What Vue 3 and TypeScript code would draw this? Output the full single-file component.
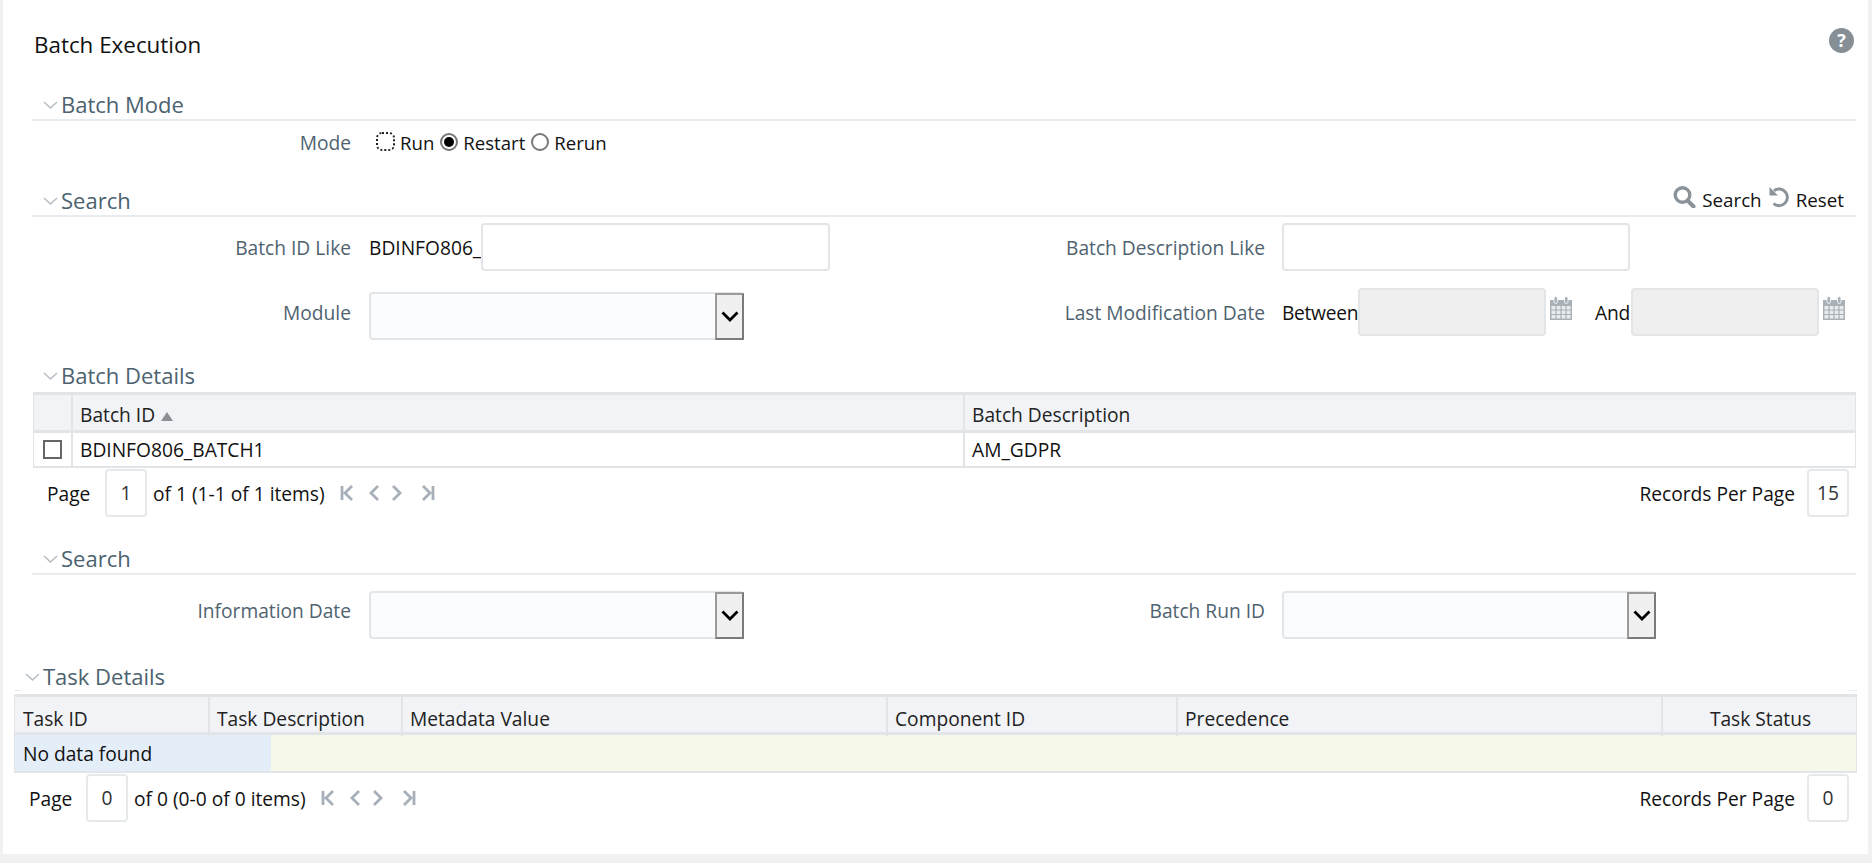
<script setup lang="ts">
const taskCols = ['Task ID', 'Task Description', 'Metadata Value', 'Component ID', 'Precedence', 'Task Status']
</script>

<template>
  <div class="page">
    <main class="panel">
      <header class="title-row">
        <h1 class="title">Batch Execution</h1>
        <svg class="help" viewBox="0 0 25 25" width="25" height="25">
          <circle cx="12.5" cy="12.5" r="12.5" fill="#868e96" />
          <text x="12.5" y="19" text-anchor="middle" class="help-q">?</text>
        </svg>
      </header>

      <section class="sec">
        <div class="head lined">
          <svg class="chev" viewBox="0 0 15 8" width="15" height="8"><path d="M1 1l6.500 6L14 1" /></svg>
          <span>Batch Mode</span>
        </div>
        <div class="mode-row">
          <span class="label">Mode</span>
          <span class="radio-focus"></span><span class="opt first">Run</span>
          <span class="radio on"><i></i></span><span class="opt">Restart</span>
          <span class="radio"></span><span class="opt">Rerun</span>
        </div>
      </section>

      <section class="sec">
        <div class="head lined">
          <svg class="chev" viewBox="0 0 15 8" width="15" height="8"><path d="M1 1l6.500 6L14 1" /></svg>
          <span>Search</span>
          <div class="actions">
            <svg class="act-ico" viewBox="0 0 23 22" width="23" height="22">
              <circle cx="9.500" cy="9" r="7.300" fill="none" stroke="#8b939a" stroke-width="3.400" />
              <path d="M14.500 14.500l6 6" stroke="#8b939a" stroke-width="4" stroke-linecap="round" />
            </svg>
            <span class="act-text s">Search</span>
            <svg class="act-ico" viewBox="0 0 22 22" width="22" height="22">
              <path d="M6 4.800A8.300 8.300 0 1 1 5.500 17.500" fill="none" stroke="#8b939a" stroke-width="3" />
              <path d="M1.500 1v8.500H10z" fill="#8b939a" />
            </svg>
            <span class="act-text">Reset</span>
          </div>
        </div>
        <div class="form-row first-form">
          <div class="field">
            <span class="label">Batch ID Like</span>
            <span class="prefix">BDINFO806_</span>
            <span class="input batch-input"></span>
          </div>
          <div class="field">
            <span class="label wide">Batch Description Like</span>
            <span class="input desc-input"></span>
          </div>
        </div>
        <div class="form-row second-form">
          <div class="field">
            <span class="label lower">Module</span>
            <span class="select low">
              <span class="arrow"><svg viewBox="0 0 18 11" width="18" height="11"><path d="M1.500 1.500L9 9l7.500-7.500" /></svg></span>
            </span>
          </div>
          <div class="field">
            <span class="label wide lower">Last Modification Date</span>
            <span class="plain lower between">Between</span>
            <span class="input date"></span>
            <svg class="cal" viewBox="0 0 22 24" width="22" height="24">
              <path d="M0 4h22v20H0z" fill="#a9b0b6" />
              <path d="M1.500 10h19v12.500h-19z" fill="#e9ecee" />
              <path d="M6 10v13M11 10v13M16 10v13M1 14h20M1 18.500h20" stroke="#a9b0b6" stroke-width="1.200" />
              <rect x="4" y="0.500" width="3.500" height="7" rx="1.700" fill="#a9b0b6" stroke="#fff" stroke-width="0.800" />
              <rect x="14.500" y="0.500" width="3.500" height="7" rx="1.700" fill="#a9b0b6" stroke="#fff" stroke-width="0.800" />
            </svg>
            <span class="plain lower and">And</span>
            <span class="input date"></span>
            <svg class="cal" viewBox="0 0 22 24" width="22" height="24">
              <path d="M0 4h22v20H0z" fill="#a9b0b6" />
              <path d="M1.500 10h19v12.500h-19z" fill="#e9ecee" />
              <path d="M6 10v13M11 10v13M16 10v13M1 14h20M1 18.500h20" stroke="#a9b0b6" stroke-width="1.200" />
              <rect x="4" y="0.500" width="3.500" height="7" rx="1.700" fill="#a9b0b6" stroke="#fff" stroke-width="0.800" />
              <rect x="14.500" y="0.500" width="3.500" height="7" rx="1.700" fill="#a9b0b6" stroke="#fff" stroke-width="0.800" />
            </svg>
          </div>
        </div>
      </section>

      <section class="sec details">
        <div class="head details-head">
          <svg class="chev" viewBox="0 0 15 8" width="15" height="8"><path d="M1 1l6.500 6L14 1" /></svg>
          <span>Batch Details</span>
        </div>
        <div class="table batch-table">
          <div class="grid batch-grid thead">
            <div class="cell"></div>
            <div class="cell">Batch ID <svg class="sort" viewBox="0 0 12 9" width="12" height="9"><path d="M6 0l6 9H0z" /></svg></div>
            <div class="cell">Batch Description</div>
          </div>
          <div class="grid batch-grid tbody">
            <div class="cell check-cell"><span class="check"></span></div>
            <div class="cell">BDINFO806_BATCH1</div>
            <div class="cell">AM_GDPR</div>
          </div>
        </div>
        <div class="pager batch-pager">
          <span class="pg-label">Page</span>
          <span class="pg-box">1</span>
          <span class="pg-of">of 1 (1-1 of 1 items)</span>
          <span class="pg-icons">
            <svg viewBox="0 0 14 16" width="14" height="16"><path d="M2 1v14M12 1L5 8l7 7" /></svg>
            <svg class="prev" viewBox="0 0 12 16" width="12" height="16"><path d="M10 1L3 8l7 7" /></svg>
            <svg class="next" viewBox="0 0 12 16" width="12" height="16"><path d="M2 1l7 7-7 7" /></svg>
            <svg class="last" viewBox="0 0 14 16" width="14" height="16"><path d="M12 1v14M2 1l7 7-7 7" /></svg>
          </span>
          <span class="pg-right">Records Per Page</span>
          <span class="pg-box rec">15</span>
        </div>
      </section>

      <section class="sec">
        <div class="head lined">
          <svg class="chev" viewBox="0 0 15 8" width="15" height="8"><path d="M1 1l6.500 6L14 1" /></svg>
          <span>Search</span>
        </div>
        <div class="form-row third-form">
          <div class="field">
            <span class="label up">Information Date</span>
            <span class="select">
              <span class="arrow"><svg viewBox="0 0 18 11" width="18" height="11"><path d="M1.500 1.500L9 9l7.500-7.500" /></svg></span>
            </span>
          </div>
          <div class="field">
            <span class="label wide up">Batch Run ID</span>
            <span class="select run">
              <span class="arrow"><svg viewBox="0 0 18 11" width="18" height="11"><path d="M1.500 1.500L9 9l7.500-7.500" /></svg></span>
            </span>
          </div>
        </div>
      </section>

      <section class="task">
        <div class="head task-head">
          <svg class="chev" viewBox="0 0 15 8" width="15" height="8"><path d="M1 1l6.500 6L14 1" /></svg>
          <span>Task Details</span>
        </div>
        <div class="table">
          <div class="grid task-grid thead">
            <div v-for="c in taskCols" :key="c" class="cell" :class="{ center: c === 'Task Status' }">{{ c }}</div>
          </div>
          <div class="empty"><span class="empty-text">No data found</span></div>
        </div>
        <div class="pager task-pager">
          <span class="pg-label">Page</span>
          <span class="pg-box">0</span>
          <span class="pg-of">of 0 (0-0 of 0 items)</span>
          <span class="pg-icons">
            <svg viewBox="0 0 14 16" width="14" height="16"><path d="M2 1v14M12 1L5 8l7 7" /></svg>
            <svg class="prev" viewBox="0 0 12 16" width="12" height="16"><path d="M10 1L3 8l7 7" /></svg>
            <svg class="next" viewBox="0 0 12 16" width="12" height="16"><path d="M2 1l7 7-7 7" /></svg>
            <svg class="last" viewBox="0 0 14 16" width="14" height="16"><path d="M12 1v14M2 1l7 7-7 7" /></svg>
          </span>
          <span class="pg-right">Records Per Page</span>
          <span class="pg-box rec">0</span>
        </div>
      </section>
    </main>
  </div>
</template>

<style>
html, body { margin: 0; background: #f1f1f1; }
</style>

<style scoped>
.page {
  width: 1872px;
  height: 863px;
  overflow: hidden;
  background: #f1f1f1;
  font-family: "Open Sans", "Noto Sans", sans-serif;
  font-size: 19.2px;
  color: #111;
}
.panel {
  width: 1865px;
  height: 854px;
  margin-left: 3px;
  background: #fff;
}
.title-row {
  height: 90px;
  display: flex;
  align-items: center;
  justify-content: space-between;
  padding: 0 14px 2px 31px;
  box-sizing: border-box;
}
.title { margin: 0; font-size: 22.4px; font-weight: 400; }
.help { margin-top: -8px; }
.help-q { fill: #fff; font-size: 18px; font-weight: 700; font-family: "Open Sans", sans-serif; }
.sec { margin: 0 12px 0 29px; }
.head {
  display: flex;
  align-items: center;
  height: 29px;
  font-size: 22px;
  line-height: 29px;
  color: #4c626f;
}
.head.lined { height: 31px; box-sizing: border-box; border-bottom: 2px solid #e9ecef; }
.details-head { height: 31px; box-sizing: border-box; padding-bottom: 2px; }
.chev { margin: 0 3px 0 11px; flex: none; }
.chev path { fill: none; stroke: #b6bdc3; stroke-width: 1.500; }
.actions { margin-left: auto; display: flex; align-items: flex-start; height: 29px; padding-right: 12px; color: #111; font-size: 18.8px; }
.act-ico { flex: none; margin-top: 0; }
.act-text { margin-left: 6px; margin-top: 0; line-height: 29px; }
.act-text.s { margin-right: 6px; }
.mode-row {
  height: 65px;
  box-sizing: border-box;
  padding-top: 9px;
  display: flex;
  align-items: flex-start;
}
.label {
  width: 319px;
  flex: none;
  text-align: right;
  color: #4f6370;
  line-height: 28px;
  margin-right: 18px;
  white-space: nowrap;
}
.label.wide { width: 320px; margin-right: 17px; }
.label.lower { margin-top: 13px; }
.label.up { margin-top: 6px; }
.radio-focus {
  width: 19px;
  height: 19px;
  box-sizing: border-box;
  border: 2px dotted #222;
  border-radius: 6px;
  margin: 2px 0 0 7px;
  flex: none;
}
.opt { line-height: 28px; margin: -1px 6px 0 5px; font-size: 18.6px; }
.mode-row .label { margin-top: -1px; }
.radio {
  width: 18px;
  height: 18px;
  box-sizing: border-box;
  border: 2px solid #777;
  border-radius: 50%;
  margin-top: 3px;
  flex: none;
  display: flex;
  align-items: center;
  justify-content: center;
}
.radio i { width: 10px; height: 10px; border-radius: 50%; background: #000; display: block; }
.form-row { display: grid; grid-template-columns: 913px 1fr; }
.field { display: flex; align-items: flex-start; }
.first-form { height: 54px; padding-top: 6px; box-sizing: border-box; }
.first-form .label, .first-form .prefix { margin-top: 11px; line-height: 28px; }
.prefix { width: 112px; flex: none; white-space: nowrap; }
.input {
  display: block;
  height: 48px;
  box-sizing: border-box;
  border: 2px solid #e3e6e8;
  border-radius: 4px;
  background: #fff;
  flex: none;
}
.batch-input { width: 349px; }
.desc-input { width: 348px; }
.second-form { height: 54px; margin-top: 15px; }
.plain { line-height: 28px; flex: none; white-space: nowrap; }
.plain.lower { margin-top: 13px; }
.between { width: 76px; letter-spacing: -0.3px; }
.and { width: 36px; margin-left: 23px; letter-spacing: -0.2px; }
.date { width: 188px; height: 48px; margin-top: 2px; background: #efefef; }
.cal { margin: 10px 0 0 4px; flex: none; }
.select {
  display: flex;
  justify-content: flex-end;
  width: 375px;
  height: 48px;
  box-sizing: border-box;
  border: 2px solid #e3e6e8;
  border-radius: 4px;
  background: #fbfcfd;
  flex: none;
}
.select.low { margin-top: 6px; }
.select.run { width: 374px; }
.arrow {
  width: 29px;
  height: 47px;
  margin: -1px -2px -2px 0;
  box-sizing: border-box;
  border: 2px solid #7b7b7b;
  border-top-color: #9a9a9a;
  border-left-color: #9a9a9a;
  background: #f0f0f0;
  display: flex;
  align-items: center;
  justify-content: center;
}
.arrow svg { fill: none; stroke: #000; stroke-width: 2.800; }
.details { margin: 21px 12px 0 30px; }
.details .chev { margin-left: 10px; }
.table { border: 2px solid #e1e5e8; border-top-width: 3px; border-right-width: 1px; border-left-width: 1px; }
.grid { display: grid; }
.batch-grid { grid-template-columns: 37px 892px 1fr; }
.task-grid { grid-template-columns: 193px 193px 485px 290px 485px 1fr; }
.thead { height: 35px; background: #f1f3f6; border-bottom: 3px solid #e1e5e8; }
.tbody { height: 33px; }
.cell {
  padding-left: 7px;
  line-height: 35px;
  white-space: nowrap;
  border-left: 2px solid #e1e5e8;
  color: #222;
  box-sizing: border-box;
}
.batch-grid.thead .cell { padding-top: 2px; }
.task-grid.thead .cell { padding-top: 4px; }
.task-grid .cell:first-child { padding-left: 8px; }
.tbody .cell { line-height: 33px; color: #111; }
.cell:first-child { border-left: 0; }
.cell.center { text-align: center; padding-left: 2px; }
.sort { fill: #8a8f94; margin-left: 1px; margin-bottom: 1px; }
.check-cell { display: flex; align-items: center; padding-left: 9px; }
.check { width: 19px; height: 19px; box-sizing: border-box; border: 2px solid #666; display: block; }
.pager { display: flex; align-items: flex-start; height: 76px; box-sizing: border-box; padding-top: 1px; }
.batch-pager { padding-left: 14px; padding-right: 7px; }
.task-pager { padding-left: 15px; padding-right: 8px; height: auto; }
.task-pager .pg-label { width: 57px; }
.pg-label { width: 58px; flex: none; line-height: 28px; margin-top: 11px; }
.pg-box {
  width: 42px;
  height: 48px;
  box-sizing: border-box;
  border: 2px solid #e6e9eb;
  border-radius: 4px;
  text-align: center;
  line-height: 43px;
  flex: none;
  color: #333;
}
.pg-of { margin: 11px 0 0 6px; line-height: 28px; white-space: nowrap; }
.pg-icons { display: flex; margin: 16px 0 0 15px; }
.pg-icons svg { fill: none; stroke: #a7afb8; stroke-width: 2.800; flex: none; }
.prev { margin-left: 14px; }
.next { margin-left: 11px; }
.last { margin-left: 18px; }
.pg-right { margin: 11px 12px 0 auto; line-height: 28px; white-space: nowrap; }
.third-form { height: 87px; padding-top: 16px; box-sizing: border-box; }
.task { margin: 0 11px; }
.task-head { position: relative; height: 32px; box-sizing: border-box; padding-bottom: 3px; }
.task-head .chev { margin-left: 11px; margin-right: 3px; }
.task-head::before, .task-head::after {
  content: "";
  position: absolute;
  top: 28px;
  height: 1px;
  background: #e9ecef;
}
.task-head::before { left: 0; width: 7px; }
.task-head::after { right: 0; width: 8px; }
.empty { height: 36px; background: #f6f8ea; }
.empty-text {
  display: block;
  width: 248px;
  height: 36px;
  padding-left: 8px;
  line-height: 37px;
  background: #e3eef8;
}
</style>
